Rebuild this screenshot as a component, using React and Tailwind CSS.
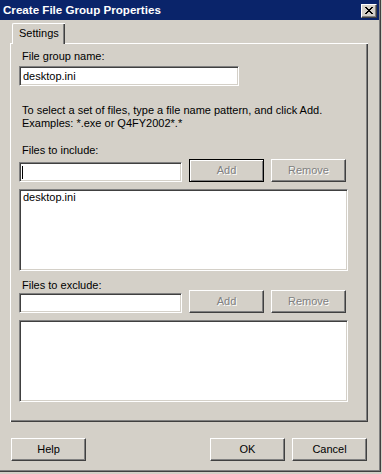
import React from "react";

const font = { fontFamily: '"Liberation Sans", Arial, sans-serif' };

const sunken =
  "bg-white border border-t-[#808080] border-l-[#808080] border-b-white border-r-white shadow-[inset_1px_1px_#404040,inset_-1px_-1px_#d4d0c8]";
const raised =
  "border border-t-white border-l-white border-b-[#404040] border-r-[#404040] shadow-[inset_-1px_-1px_#808080]";
const defRaised =
  "border border-black shadow-[inset_1px_1px_#ffffff,inset_-1px_-1px_#808080]";

function Btn({ children, disabled, def, className = "" }) {
  return (
    <div
      className={`w-[75px] h-[23px] flex items-center justify-center bg-[#d4d0c8] text-[11px] leading-[13px] ${
        def ? defRaised : raised
      } ${disabled ? "text-[#808080] [text-shadow:1px_1px_0_#ffffff]" : "text-black"} ${className}`}
    >
      {children}
    </div>
  );
}

function CloseGlyph() {
  const rows = [
    [0, 1, 6, 7],
    [1, 2, 5, 6],
    [2, 3, 4, 5],
    [3, 4],
    [2, 3, 4, 5],
    [1, 2, 5, 6],
    [0, 1, 6, 7],
  ];
  return (
    <svg width="8" height="7" viewBox="0 0 8 7" shapeRendering="crispEdges">
      {rows.map((r, y) =>
        r.map((x) => <rect key={`${x}-${y}`} x={x} y={y} width="1" height="1" fill="#000" />)
      )}
    </svg>
  );
}

export default function App() {
  return (
    <div className="w-[382px] h-[474px] bg-[#d4d0c8] overflow-hidden" style={font}>
      <div className="w-[381px] h-[472px] pr-[2px] pb-[2px] bg-[#d4d0c8] shadow-[inset_-1px_-1px_#404040,inset_-2px_-2px_#808080] flex flex-col">
        {/* Title bar */}
        <div className="h-[20px] bg-[#0a246a] flex items-center justify-between pl-[3px] pr-[2px]">
          <span className="text-white font-bold text-[11.6px] leading-[20px]">
            Create File Group Properties
          </span>
          <div className="w-[16px] h-[14px] mt-[1px] bg-[#d4d0c8] border border-t-white border-l-white border-b-[#404040] border-r-[#404040] shadow-[inset_-1px_-1px_#808080] flex items-center justify-center">
            <CloseGlyph />
          </div>
        </div>

        {/* Body */}
        <div className="pl-[10px] flex flex-col text-[11px] leading-[13px] text-black">
          {/* Tab */}
          <div className="flex mt-[3px] pl-[2px] relative z-10 -mb-[1px]">
            <div className="w-[53px] h-[21px] bg-[#d4d0c8] border-t border-l border-white rounded-tl-[2px] shadow-[inset_-1px_0_#404040,inset_-2px_0_#808080] flex items-start pl-[6px] pt-[3px]">
              Settings
            </div>
          </div>

          {/* Panel */}
          <div className="w-[358px] h-[379px] border-t border-l border-white shadow-[inset_-1px_-1px_#404040,inset_-2px_-2px_#808080] pl-[8px] pt-[6px] flex flex-col">
            <div className="pl-[3px]">File group name:</div>
            <div className={`${sunken} w-[220px] h-[20px] mt-[3px] flex items-center pl-[3px]`}>
              desktop.ini
            </div>

            <div className="pl-[3px] mt-[18px]">
              <div>To select a set of files, type a file name pattern, and click Add.</div>
              <div>Examples: *.exe or Q4FY2002*.*</div>
            </div>

            <div className="pl-[3px] mt-[14px]">Files to include:</div>
            <div className="flex items-end mt-[2px]">
              <div className={`${sunken} w-[163px] h-[20px] flex items-center pl-[2px]`}>
                <span className="w-px h-[13px] bg-black" />
              </div>
              <Btn disabled def className="ml-[7px]">Add</Btn>
              <Btn disabled className="ml-[7px]">Remove</Btn>
            </div>
            <div className={`${sunken} w-[329px] h-[82px] mt-[7px] pl-[3px] pt-[2px] leading-[11px]`}>
              desktop.ini
            </div>

            <div className="pl-[3px] mt-[8px]">Files to exclude:</div>
            <div className="flex items-end -mt-[2px]">
              <div className={`${sunken} w-[163px] h-[20px]`} />
              <Btn disabled className="ml-[7px]">Add</Btn>
              <Btn disabled className="ml-[7px]">Remove</Btn>
            </div>
            <div className={`${sunken} w-[329px] h-[82px] mt-[7px]`} />
          </div>

          {/* Bottom buttons */}
          <div className="flex justify-between w-[356px] ml-[1px] mt-[16px]">
            <Btn>Help</Btn>
            <div className="flex gap-[7px]">
              <Btn>OK</Btn>
              <Btn>Cancel</Btn>
            </div>
          </div>
        </div>
      </div>
    </div>
  );
}
